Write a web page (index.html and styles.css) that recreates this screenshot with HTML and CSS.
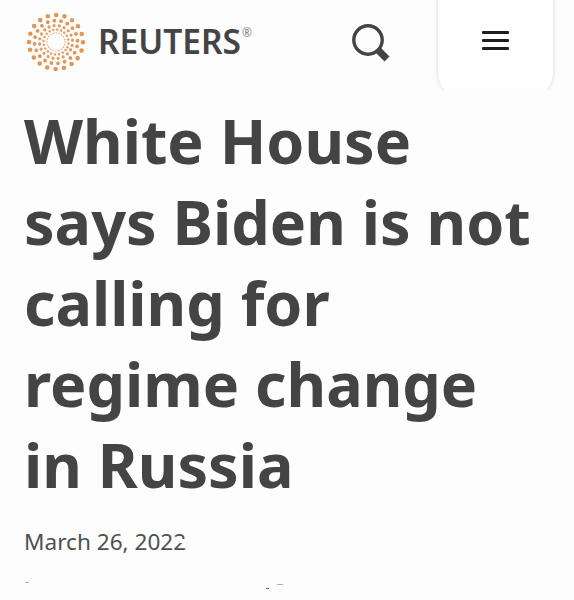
FILE: index.html
```html
<!DOCTYPE html>
<html lang="en">
<head>
    <meta charset="UTF-8">
    <title>Reuters</title>
    <link rel="stylesheet" href="styles.css">
</head>
<body>

    <nav class="navbar">
        <div class="logo">
            <svg class="logo-mark" width="68" height="66" viewBox="-34 -33 68 66" fill="none" stroke="#dc8b45" stroke-linecap="round">
                <circle r="27" stroke-width="4.6" stroke-dasharray="0 8.48" transform="rotate(180)" opacity="0.9"/>
                <circle r="21.5" stroke-width="3.8" stroke-dasharray="0 6.75" transform="rotate(12)" opacity="0.9"/>
                <circle r="16.5" stroke-width="3.2" stroke-dasharray="0 5.18" transform="rotate(28)" opacity="0.85"/>
                <circle r="12.5" stroke-width="2.6" stroke-dasharray="0 3.93" transform="rotate(40)" opacity="0.8"/>
                <circle r="9" stroke-width="1.6" stroke-dasharray="0 2.83" opacity="0.7"/>
            </svg>
            <span class="logo-text">REUTERS</span><span class="logo-reg">®</span>
        </div>
        <div class="nav-links">
            <button class="search-btn" aria-label="Search">
                <svg width="42" height="44" viewBox="0 0 42 44" fill="none" stroke="#444">
                    <circle cx="18" cy="18" r="14.2" stroke-width="3.4"/>
                    <path d="M28 28 L37 37" stroke-width="7"/>
                </svg>
            </button>
            <button class="menu-tab" aria-label="Menu">
                <span class="menu-line"></span>
                <span class="menu-line"></span>
                <span class="menu-line"></span>
            </button>
        </div>
    </nav>

    <article class="story">
        <h1>White House<br>says Biden is not<br>calling for<br>regime change<br>in Russia</h1>
        <p class="story-date">March 26, 2022</p>
    </article>

    <span class="speck speck-a"></span>
    <span class="speck speck-b"></span>
    <span class="speck speck-c"></span>

</body>
</html>
```

FILE: styles.css
```css
* {
    margin: 0;
    padding: 0;
    box-sizing: border-box;
}

body {
    background: #fdfdfd;
    color: #444444;
    font-family: 'Noto Sans', 'Open Sans', sans-serif;
    overflow: hidden;
}

/* header */
.navbar {
    height: 90px;
    padding: 0 21px 0 22px;
    display: flex;
    justify-content: space-between;
    overflow: hidden;
}

.logo {
    display: flex;
    align-items: center;
    padding-bottom: 6px;
}

.logo-text {
    margin: -3px 0 0 8px;
    font-size: 33.5px;
    font-weight: 600;
}

.logo-reg {
    margin: -19px 0 0 1px;
    font-size: 12px;
    color: #888888;
}

.nav-links {
    display: flex;
}

button {
    background: none;
    border: none;
}

.search-btn {
    align-self: flex-start;
    margin: 22px 46px 0 0;
    height: 44px;
}

.menu-tab {
    width: 115px;
    height: 110px;
    margin-top: -10px;
    padding-top: 41px;
    display: flex;
    flex-direction: column;
    align-items: center;
    gap: 5px;
    background: #ffffff;
    border-radius: 0 0 28px 28px;
    box-shadow: 0 0 5px rgba(0, 0, 0, 0.14);
}

.menu-line {
    width: 27px;
    height: 3px;
    background: #1e1e1e;
    border-radius: 1px;
}

/* story */
.story {
    padding: 10px 24px 0;
}

h1 {
    font-size: 61px;
    line-height: 81px;
    font-weight: 700;
    color: #444444;
}

.story-date {
    position: relative;
    margin-top: 21px;
    font-size: 22.6px;
    color: #505050;
}

/* scan damage over the last digit */
.story-date::after {
    content: "";
    position: absolute;
    left: 151px;
    top: 13px;
    width: 12px;
    height: 4px;
    background: #fdfdfd;
}

.speck {
    position: absolute;
    height: 1px;
    background: #b5b5b5;
}

.speck-a { left: 25px; top: 582px; width: 4px; }
.speck-b { left: 266px; top: 588px; width: 3px; background: #666666; }
.speck-c { left: 277px; top: 584px; width: 6px; }
```
